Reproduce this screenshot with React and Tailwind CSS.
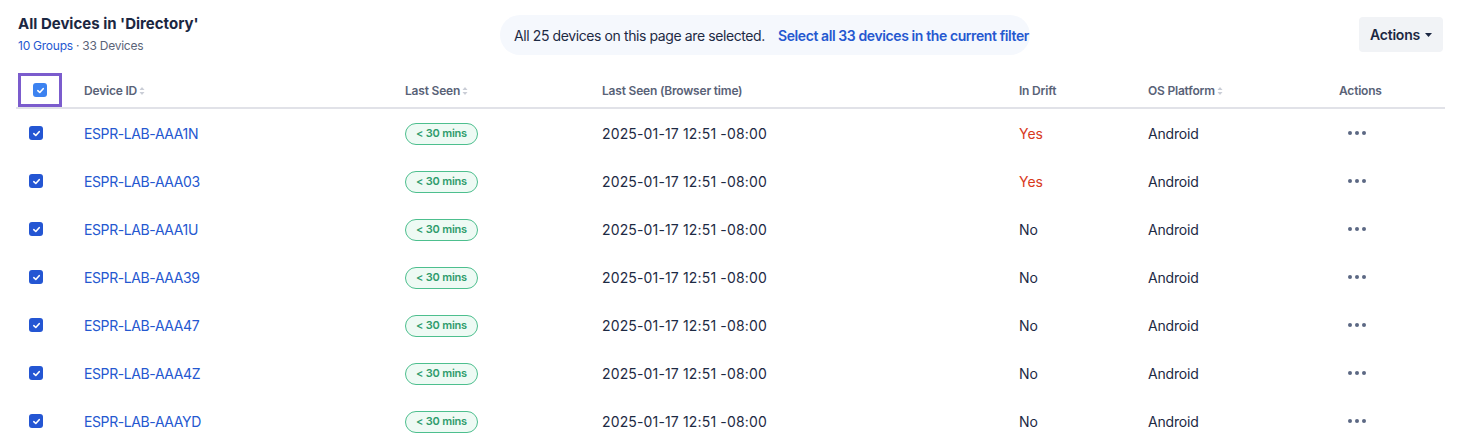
import React from 'react';

const rows = [
  { id: 'ESPR-LAB-AAA1N', drift: true },
  { id: 'ESPR-LAB-AAA03', drift: true },
  { id: 'ESPR-LAB-AAA1U', drift: false },
  { id: 'ESPR-LAB-AAA39', drift: false },
  { id: 'ESPR-LAB-AAA47', drift: false },
  { id: 'ESPR-LAB-AAA4Z', drift: false },
  { id: 'ESPR-LAB-AAAYD', drift: false },
];

const cols = 'grid grid-cols-[68px_321px_197px_417px_129px_125px_172px]';

const SortIcon = () => (
  <svg width="6" height="10" viewBox="0 0 6 10" className="ml-[2px] inline-block">
    <path d="M3 1 L5.5 4 H0.5 Z" fill="#c9cdd6" />
    <path d="M3 9 L5.5 6 H0.5 Z" fill="#c9cdd6" />
  </svg>
);

const Check = ({ light }) => (
  <span
    className={`flex h-[14px] w-[14px] items-center justify-center rounded-[3px] ${
      light ? 'bg-[#3c82f0]' : 'bg-[#2456d3]'
    }`}
  >
    <svg width="9" height="9" viewBox="0 0 10 10">
      <path d="M2 5.2 L4.2 7.2 L8 3" fill="none" stroke="white" strokeWidth="1.8" strokeLinecap="round" strokeLinejoin="round" />
    </svg>
  </span>
);

export default function App() {
  return (
    <div
      className="min-h-screen bg-white px-[16px] text-[#1d2a44]"
      style={{ fontFamily: 'Inter, "Noto Sans", sans-serif' }}
    >
      {/* Top bar */}
      <div className="flex items-start pt-[15px]">
        <div className="w-[484px] pl-[2px]">
          <h1 className="text-[15px] font-bold leading-[18px] text-[#1b2742]">
            All Devices in 'Directory'
          </h1>
          <p className="mt-[5px] text-[12px] leading-[16px] tracking-[-0.25px] text-[#5b6478]">
            <span className="text-[#2558d0]">10 Groups</span> · 33 Devices
          </p>
        </div>
        <div className="flex h-[40px] w-[530px] items-center whitespace-nowrap rounded-full bg-[#f5f8fd] pl-[14px] text-[14px] tracking-[-0.4px]">
          <span className="text-[#1d2a44]">All 25 devices on this page are selected.</span>
          <span className="ml-[13px] font-semibold text-[#2558d0]">
            Select all 33 devices in the current filter
          </span>
        </div>
        <button className="ml-auto mr-[-2px] mt-[2px] flex h-[35px] w-[84px] items-center justify-center gap-[5px] rounded-[4px] bg-[#f1f3f6] text-[14px] font-semibold tracking-[-0.2px] text-[#1b2742]">
          Actions
          <svg width="7" height="4" viewBox="0 0 7 4">
            <path d="M0 0 H7 L3.5 4 Z" fill="#1b2742" />
          </svg>
        </button>
      </div>

      {/* Table */}
      <div className="mt-[18px] w-[1429px]">
        <div className={`${cols} h-[36px] items-center border-b-2 border-[#e1e2e8] text-[12px] font-semibold tracking-[-0.2px] text-[#596277]`}>
          <div className="h-full pl-[2px]">
            <div className="flex h-[34px] w-[44px] items-center justify-center border-[3px] border-[#7b5ccd]">
              <Check light />
            </div>
          </div>
          <div className="flex items-center pt-[1px]">Device ID<SortIcon /></div>
          <div className="flex items-center pt-[1px]">Last Seen<SortIcon /></div>
          <div className="pt-[1px]">Last Seen (Browser time)</div>
          <div className="pt-[1px]">In Drift</div>
          <div className="flex items-center pt-[1px]">OS Platform<SortIcon /></div>
          <div className="pl-[66px] pt-[1px]">Actions</div>
        </div>

        {rows.map((r) => (
          <div key={r.id} className={`${cols} h-[48px] items-center text-[14px]`}>
            <div className="pl-[13px]">
              <Check />
            </div>
            <div className="tracking-[-0.4px] text-[#2558d0]">{r.id}</div>
            <div>
              <span className="inline-flex h-[22px] items-center rounded-full border border-[#4dbf8e] bg-[#eefaf4] px-[10px] text-[11px] font-semibold tracking-[-0.2px] text-[#2f9c6c]">
                &lt; 30 mins
              </span>
            </div>
            <div className="tracking-[0.15px] text-[#1d2a44]">2025-01-17 12:51 -08:00</div>
            <div className={r.drift ? 'text-[#d8391c]' : 'text-[#1d2a44]'}>{r.drift ? 'Yes' : 'No'}</div>
            <div className="tracking-[-0.2px] text-[#1d2a44]">Android</div>
            <div className="flex gap-[3px] pl-[75px]">
              <span className="h-[4px] w-[4px] rounded-full bg-[#5c6884]" />
              <span className="h-[4px] w-[4px] rounded-full bg-[#5c6884]" />
              <span className="h-[4px] w-[4px] rounded-full bg-[#5c6884]" />
            </div>
          </div>
        ))}
      </div>
    </div>
  );
}
